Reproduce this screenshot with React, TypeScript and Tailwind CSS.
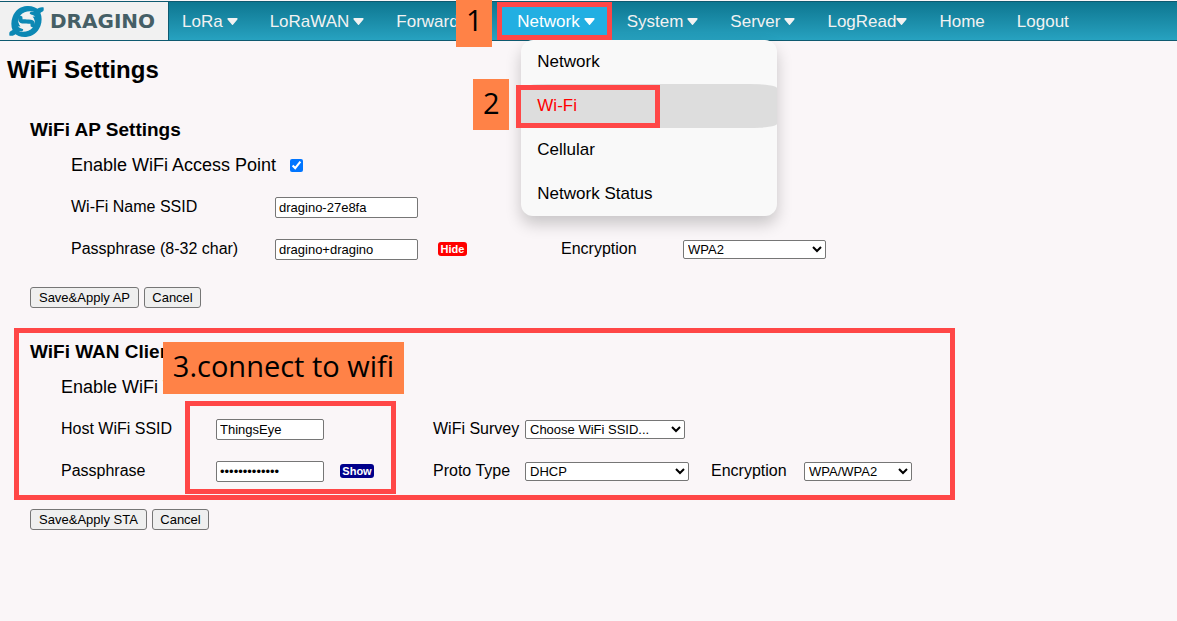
import { useState, type ReactNode } from "react";

type NavItem = { label: string; caret?: "spaced" | "tight"; width?: string };

const NAV: NavItem[] = [
  { label: "LoRa", caret: "spaced" },
  { label: "LoRaWAN", caret: "spaced" },
  { label: "Forward", caret: "spaced", width: "w-[121px]" },
  { label: "Network", caret: "spaced" },
  { label: "System", caret: "spaced" },
  { label: "Server", caret: "spaced" },
  { label: "LogRead", caret: "tight" },
  { label: "Home" },
  { label: "Logout" },
];

const NETWORK_MENU = ["Network", "Wi-Fi", "Cellular", "Network Status"];

const FIELD = "h-[21px] rounded-[2px] border border-[#767676] bg-white px-[3px] text-[13px] text-black";
const SELECT = "h-[19px] rounded-[2px] border border-[#767676] bg-white text-[13px] text-black";

function Caret() {
  return (
    <svg viewBox="0 192 320 170" preserveAspectRatio="none" className="mb-[2px] h-[7px] w-[11px] fill-current" aria-hidden="true">
      <path d="M31.3 192h257.3c17.8 0 26.7 21.5 14.1 34.1L174.1 354.8c-7.8 7.8-20.5 7.8-28.3 0L17.2 226.1C4.6 213.5 13.5 192 31.3 192z" />
    </svg>
  );
}

// One arm of the swirl; the second is the same shape turned by 180 degrees
const SWIRL_ARM =
  "M28 104L28 95C30 90 35 90 38 87C33 76 33 60 38 47C46 27 62 15 82 14C97 13 110 18 120 27C116 32 112 34 107 33C92 26 72 30 62 42C52 54 55 72 68 82C74 87 68 92 60 90L52 96C46 102 36 107 28 104Z";
const SWIRL_CORE = "M56 62C56 48 68 38 84 38C93 38 102 41 107 46C96 45 90 49 88 55C86 62 84 68 72 76C62 76 56 70 56 62Z";

function Logo() {
  return (
    <a href="#home" className="flex w-[169px] shrink-0 items-center gap-[5px] border-r border-[#0e5a70] bg-[#f1f1f1] pl-2">
      <svg viewBox="24 11 113 100" className="h-[33px] w-[37px] shrink-0" aria-hidden="true">
        <g fill="#0c88b4">
          <path d={SWIRL_ARM} />
          <path d={SWIRL_ARM} transform="rotate(180 80.5 61)" />
        </g>
        <g fill="#f1f1f1">
          <path d={SWIRL_CORE} />
          <path d={SWIRL_CORE} transform="rotate(180 80.5 61)" />
        </g>
        <path
          d="M62 50C60 64 72 60 81 61S101 58 99 72"
          fill="none"
          stroke="#0c88b4"
          strokeWidth="13"
          strokeLinecap="round"
        />
      </svg>
      <span className="font-['DejaVu_Sans',sans-serif] text-[20px] leading-6 font-bold text-[#455f66]">DRAGINO</span>
    </a>
  );
}

// Orange step label
function Step({ className, children }: { className: string; children: ReactNode }) {
  return (
    <div
      className={`absolute z-30 flex items-center justify-center bg-[#ff8247] font-['Open_Sans','Noto_Sans',sans-serif] text-[29px] whitespace-nowrap text-black ${className}`}
    >
      {children}
    </div>
  );
}

// Red highlight frame
function Frame({ className }: { className: string }) {
  return <div className={`pointer-events-none absolute z-20 border-[5px] border-[#ff4747] ${className}`} />;
}

function NetworkMenu() {
  return (
    <div className="absolute top-[38px] left-5 z-10 w-64">
      <ul className="overflow-hidden rounded-xl bg-[#f9f9f9] shadow-[0_8px_16px_rgba(0,0,0,0.2)]">
        {NETWORK_MENU.map((item) => (
          <li key={item}>
            <a
              href="#network"
              className={`flex h-11 items-center px-4 ${
                item === "Wi-Fi" ? "rounded-[28px/4px] bg-[#ddd] text-[#f00]" : "text-black"
              }`}
            >
              {item}
            </a>
          </li>
        ))}
      </ul>
      <Frame className="top-[45px] -left-[5px] h-[43px] w-[144px]" />
      <Step className="top-[39px] -left-12 h-[51px] w-9 pb-1">2</Step>
    </div>
  );
}

function Header() {
  return (
    <header className="mt-px flex h-10 border-y border-[#0e5a70] bg-linear-to-b from-[#0d7791] to-[#27a2c0] text-[17px]">
      <Logo />
      <nav>
        <ul className="flex h-full">
          {NAV.map(({ label, caret, width }) => {
            const active = label === "Network";
            return (
              <li key={label} className={`group relative ${width ?? ""}`}>
                <a
                  href="#nav"
                  className={`flex h-full items-center px-4 pt-[2px] group-first:pl-[13px] ${
                    caret === "spaced" ? "gap-1" : ""
                  } ${active ? "bg-[#22afe2] text-white" : "text-[#f2f2f2]"}`}
                >
                  {label}
                  {caret && <Caret />}
                </a>
                {active && (
                  <>
                    <Frame className="top-0 -left-1 h-[38px] w-[115px]" />
                    <Step className="-top-[2px] -left-[45px] h-[47px] w-9 pb-2">1</Step>
                    <NetworkMenu />
                  </>
                )}
              </li>
            );
          })}
        </ul>
      </nav>
    </header>
  );
}

function Reveal({ shown, onClick }: { shown: boolean; onClick: () => void }) {
  return (
    <button
      type="button"
      onClick={onClick}
      className={`h-[14px] rounded-[3px] text-[11px] leading-[14px] font-bold text-white ${
        shown ? "w-[29px] bg-[#f00]" : "w-[34px] bg-[#00008b]"
      }`}
    >
      {shown ? "Hide" : "Show"}
    </button>
  );
}

function Actions({ save, width }: { save: string; width: string }) {
  const base = "h-[21px] rounded-[3px] border border-[#767676] bg-[#efefef] text-[13px] leading-[19px]";
  return (
    <div className="mt-[17px] flex gap-[5px]">
      <button type="submit" className={`${base} ${width}`}>
        {save}
      </button>
      <button type="reset" className={`${base} w-[57px]`}>
        Cancel
      </button>
    </div>
  );
}

function AccessPoint() {
  const [shown, setShown] = useState(true);
  return (
    <form className="pl-[30px]">
      <h2 className="text-[19px] leading-6 font-bold">WiFi AP Settings</h2>
      <div className="mt-[2px] pl-[41px]">
        <div className="flex h-[42px] items-center gap-[14px]">
          <label htmlFor="ap-on" className="text-lg">
            Enable WiFi Access Point
          </label>
          <input id="ap-on" type="checkbox" defaultChecked className="size-[13px] accent-[#0075ff]" />
        </div>
        <div className="grid auto-rows-[42px] grid-cols-[204px_163px_123px_122px_1fr] items-center justify-items-start">
          <label htmlFor="ap-ssid">Wi-Fi Name SSID</label>
          <input id="ap-ssid" defaultValue="dragino-27e8fa" className={`${FIELD} col-span-4 w-[143px]`} />
          <label htmlFor="ap-pass">Passphrase (8-32 char)</label>
          <input
            id="ap-pass"
            type={shown ? "text" : "password"}
            defaultValue="dragino+dragino"
            className={`${FIELD} w-[143px]`}
          />
          <Reveal shown={shown} onClick={() => setShown(!shown)} />
          <label htmlFor="ap-enc">Encryption</label>
          <select id="ap-enc" className={`${SELECT} w-[143px]`}>
            <option>WPA2</option>
          </select>
        </div>
      </div>
      <Actions save="Save&Apply AP" width="w-[109px]" />
    </form>
  );
}

function WanClient() {
  const [shown, setShown] = useState(false);
  return (
    <form className="relative mt-8 pl-[30px]">
      <h2 className="text-[19px] leading-6 font-bold">WiFi WAN Client Settings</h2>
      <div className="mt-[2px] pl-[31px]">
        <div className="flex h-[42px] items-center gap-[14px]">
          <label htmlFor="wan-on" className="text-lg">
            Enable WiFi WAN Client
          </label>
          <input id="wan-on" type="checkbox" defaultChecked className="size-[13px] accent-[#0075ff]" />
        </div>
        <div className="grid auto-rows-[42px] grid-cols-[155px_124px_93px_92px_186px_93px_1fr] items-center justify-items-start">
          <label htmlFor="wan-ssid">Host WiFi SSID</label>
          <input id="wan-ssid" defaultValue="ThingsEye" className={`${FIELD} col-span-2 w-[108px]`} />
          <label htmlFor="wan-survey">WiFi Survey</label>
          <select id="wan-survey" className={`${SELECT} col-span-3 w-[160px]`}>
            <option>Choose WiFi SSID...</option>
          </select>
          <label htmlFor="wan-pass">Passphrase</label>
          <input
            id="wan-pass"
            type={shown ? "text" : "password"}
            defaultValue="thingseye1234"
            className={`${FIELD} w-[108px]`}
          />
          <Reveal shown={shown} onClick={() => setShown(!shown)} />
          <label htmlFor="wan-proto">Proto Type</label>
          <select id="wan-proto" className={`${SELECT} w-[164px]`}>
            <option>DHCP</option>
          </select>
          <label htmlFor="wan-enc">Encryption</label>
          <select id="wan-enc" className={`${SELECT} w-[108px]`}>
            <option>WPA/WPA2</option>
          </select>
        </div>
      </div>
      <Actions save="Save&Apply STA" width="w-[117px]" />

      <Frame className="-top-3 left-[14px] h-[172px] w-[941px]" />
      <Frame className="top-[61px] left-[185px] h-[93px] w-[211px]" />
      <Step className="top-[2px] left-[163px] h-[52px] w-[241px] pb-1">3.connect to wifi</Step>
    </form>
  );
}

export default function App() {
  return (
    <div className="flow-root min-h-screen bg-[#faf6f8] font-['Liberation_Sans',Arial,sans-serif] text-base text-black">
      <Header />
      <main>
        <h1 className="mt-[15px] mb-[34px] pl-[7px] text-2xl leading-7 font-bold">WiFi Settings</h1>
        <AccessPoint />
        <WanClient />
      </main>
    </div>
  );
}
